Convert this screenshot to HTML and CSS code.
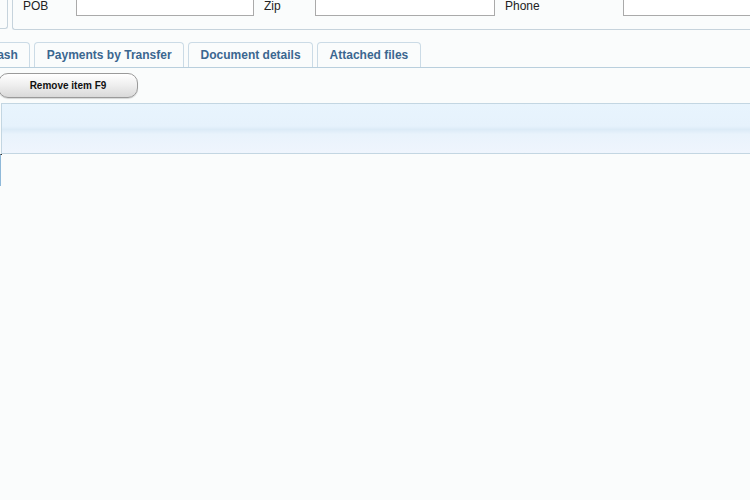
FILE: index.html
```html
<!DOCTYPE html>
<html lang="en">
<head>
  <meta charset="UTF-8">
  <title>Document</title>
  <link rel="stylesheet" href="styles.css">
</head>
<body>
  <div class="page">
    <div class="top">
      <div class="prev-box"></div>
      <div class="fields">
        <div class="field"><span class="lbl lbl-pob">POB</span><input class="inp inp-pob" type="text"></div>
        <div class="field"><span class="lbl lbl-zip">Zip</span><input class="inp inp-zip" type="text"></div>
        <div class="field"><span class="lbl lbl-phone">Phone</span><input class="inp inp-phone" type="text"></div>
      </div>
    </div>

    <div class="tabs">
      <div class="tab">Cash</div>
      <div class="tab">Payments by Transfer</div>
      <div class="tab">Document details</div>
      <div class="tab">Attached files</div>
    </div>

    <div class="toolbar">
      <button class="btn">Remove item F9</button>
    </div>

    <div class="grid-head"></div>
    <div class="grid-body"></div>
  </div>
</body>
</html>
```

FILE: styles.css
```css
html, body {
  margin: 0;
  padding: 0;
  background: #fafcfc;
  overflow: hidden;
  font-family: "Liberation Sans", Arial, sans-serif;
}
.page {
  width: 780px;
}
.top {
  display: flex;
  height: 41px;
  margin-top: -10px;
}
.prev-box {
  width: 8px;
  border-right: 1px solid #c6d3dc;
  border-bottom: 1px solid #c6d3dc;
  height: 39px;
  border-bottom-right-radius: 3px;
  box-sizing: border-box;
}
.fields {
  margin-left: 4px;
  flex: 1;
  display: flex;
  border-left: 1px solid #c6d3dc;
  border-bottom: 1px solid #c6d3dc;
  border-bottom-left-radius: 3px;
  height: 40px;
  box-sizing: border-box;
  padding-left: 10px;
}
.field {
  display: flex;
  height: 26px;
}
.lbl {
  font-size: 12px;
  color: #222;
  padding-top: 9px;
}
.inp {
  height: 26px;
  box-sizing: border-box;
  border: 1px solid #aaa;
  background: #fff;
  margin: 0;
}
.lbl-pob { width: 53px; }
.inp-pob { width: 178px; }
.lbl-zip { width: 51px; margin-left: 10px; }
.inp-zip { width: 180px; }
.lbl-phone { width: 118px; margin-left: 10px; }
.inp-phone { width: 140px; }

.tabs {
  display: flex;
  gap: 4px;
  margin-top: 11px;
  margin-left: -24px;
  border-bottom: 1px solid #b9cfdd;
  height: 25px;
}
.tab {
  border: 1px solid #cbdbe6;
  border-bottom: none;
  border-radius: 4px 4px 0 0;
  padding: 0 11.5px;
  font-size: 12px;
  font-weight: bold;
  color: #3b6790;
  line-height: 24px;
  background: #fafcfc;
}

.toolbar {
  padding-top: 5px;
  height: 35px;
  box-sizing: border-box;
}
.btn {
  margin-left: -2px;
  width: 140px;
  height: 25px;
  border: 1px solid #9a9a9a;
  border-radius: 10px;
  background: linear-gradient(#ffffff, #f0f0f0 45%, #d9d9d9);
  font-family: "Liberation Sans", Arial, sans-serif;
  font-size: 10px;
  font-weight: bold;
  color: #111;
  box-shadow: 0 1px 1px rgba(0,0,0,0.15);
}

.grid-head {
  height: 51px;
  border-top: 1px solid #c3d6e2;
  border-bottom: 1px solid #c3d6e2;
  border-left: 1px solid #c3d6e2;
  margin-left: 1px;
  box-sizing: border-box;
  background: linear-gradient(#e8f4fd, #e6f2fc 45%, #dcebf7 52%, #e9f3fc 62%, #eff5fd);
}
.grid-body {
  height: 32px;
  border-left: 1px solid #8fb9d9;
  border-top: 1px solid #333;
  box-sizing: border-box;
  width: 2px;
}
```
